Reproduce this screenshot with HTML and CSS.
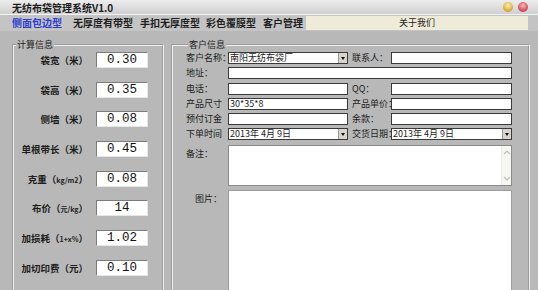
FILE: index.html
```html
<!DOCTYPE html>
<html lang="zh-CN">
<head>
    <meta charset="UTF-8">
    <title>无纺布袋管理系统V1.0</title>
    <link rel="stylesheet" href="styles.css">
</head>
<body>
    <div class="titlebar">
        <span class="title">无纺布袋管理系统V1.0</span>
        <span class="winbtns"><i class="dot yellow"></i><i class="dot red"></i></span>
    </div>
    <div class="tabs">
        <span class="tab active">侧面包边型</span>
        <span class="tab">无厚度有带型</span>
        <span class="tab">手扣无厚度型</span>
        <span class="tab">彩色覆膜型</span>
        <span class="tab">客户管理</span>
        <span class="about">关于我们</span>
    </div>

    <div class="main">
        <fieldset class="calc">
            <legend>计算信息</legend>
            <div class="calc-row"><label>袋宽（米）</label><div class="num">0.30</div></div>
            <div class="calc-row"><label>袋高（米）</label><div class="num">0.35</div></div>
            <div class="calc-row"><label>侧墙（米）</label><div class="num">0.08</div></div>
            <div class="calc-row"><label>单根带长（米）</label><div class="num">0.45</div></div>
            <div class="calc-row"><label>克重（<small>kg/m2</small>）</label><div class="num">0.08</div></div>
            <div class="calc-row"><label>布价（<small>元/kg</small>）</label><div class="num">14</div></div>
            <div class="calc-row"><label>加损耗（<small>1+x%</small>）</label><div class="num">1.02</div></div>
            <div class="calc-row"><label>加切印费（元）</label><div class="num">0.10</div></div>
        </fieldset>

        <fieldset class="customer">
            <legend>客户信息</legend>
            <div class="form">
                <label>客户名称：</label>
                <div class="field select"><span>南阳无纺布袋厂</span><i class="arrow"></i></div>
                <label class="second">联系人：</label>
                <div class="field"></div>

                <label>地址：</label>
                <div class="field wide"></div>

                <label>电话：</label>
                <div class="field"></div>
                <label class="second">QQ：</label>
                <div class="field"></div>

                <label>产品尺寸</label>
                <div class="field">30*35*8</div>
                <label class="second">产品单价：</label>
                <div class="field"></div>

                <label>预付订金</label>
                <div class="field"></div>
                <label class="second">余款：</label>
                <div class="field"></div>

                <label>下单时间</label>
                <div class="field select"><span>2013年 4月 9日</span><i class="arrow"></i></div>
                <label class="second">交货日期：</label>
                <div class="field select"><span>2013年 4月 9日</span><i class="arrow"></i></div>

                <label class="top">备注：</label>
                <div class="notes wide">
                    <div class="scroll">
                        <svg width="8" height="6" viewBox="0 0 8 6"><path d="M1 5 L4 2 L7 5" fill="none" stroke="#b9c1b4" stroke-width="1.2"/></svg>
                        <svg width="8" height="6" viewBox="0 0 8 6"><path d="M1 1 L4 4 L7 1" fill="none" stroke="#b9c1b4" stroke-width="1.2"/></svg>
                    </div>
                </div>

                <label class="top pic">图片：</label>
                <div class="picture wide"></div>
            </div>
        </fieldset>
    </div>
</body>
</html>
```

FILE: styles.css
```css
* {
    box-sizing: border-box;
}
body {
    margin: 0;
    width: 538px;
    height: 290px;
    overflow: hidden;
    background-color: #b8b8b8;
    font-family: "Noto Sans CJK SC", sans-serif;
    color: #1c1c1c;
}
.titlebar {
    height: 15px;
    display: flex;
    align-items: center;
    justify-content: space-between;
    padding: 0 10px 0 12px;
    background: linear-gradient(#ededed, #d0d0d0);
    border-bottom: 1px solid #f4f4f4;
}
.title {
    font-size: 10px;
    font-weight: bold;
    line-height: 15px;
}
.winbtns {
    display: flex;
    gap: 5px;
}
.dot {
    display: block;
    width: 10px;
    height: 10px;
    border-radius: 50%;
}
.yellow {
    background: radial-gradient(circle at 50% 35%, #fff1b0, #dcaa35 65%, #a8791c);
}
.red {
    background: radial-gradient(circle at 50% 35%, #f7b8b8, #d24d55 65%, #9a2a30);
}
.tabs {
    height: 16px;
    display: grid;
    grid-template-columns: 61px 67px 66px 57px 43px 1fr;
    align-items: center;
    padding: 0 10px 0 12px;
    background-color: #c4c4c4;
}
.tab {
    font-size: 10px;
    font-weight: bold;
    line-height: 16px;
    white-space: nowrap;
    color: #1e1e1e;
}
.tab.active {
    color: #2b3ccf;
}
.about {
    height: 14px;
    background-color: #efebd9;
    font-size: 9px;
    line-height: 14px;
    text-align: center;
}
.main {
    display: flex;
    gap: 7px;
    padding: 8px 0 0 12px;
}
fieldset {
    margin: 0;
    height: 262px;
    border: 2px groove #f0f0f0;
}
legend {
    font-size: 9px;
    line-height: 12px;
    padding: 0 1px;
    margin-left: 2px;
}
.calc {
    width: 152px;
    padding: 1px 0 0 0;
    display: flex;
    flex-direction: column;
    gap: 13.7px;
}
.calc-row {
    display: flex;
    align-items: center;
    gap: 8px;
    height: 16px;
}
.calc-row label {
    width: 74px;
    text-align: right;
    font-size: 9.5px;
    font-weight: bold;
    white-space: nowrap;
}
.calc-row small {
    font-size: 7px;
}
.num {
    width: 52px;
    height: 16px;
    background-color: #fff;
    border: 1px solid;
    border-color: #7c7c7c #e6e6e6 #e6e6e6 #7c7c7c;
    font-family: "Liberation Mono", monospace;
    font-size: 12.5px;
    line-height: 14px;
    text-align: center;
    color: #111;
}
.customer {
    width: 359px;
    padding: 1px 0 0 13px;
}
.form {
    display: grid;
    grid-template-columns: 42px 120px 43px 121px;
    grid-template-rows: repeat(6, 12px) 42px 110px;
    row-gap: 3.3px;
    font-size: 9px;
}
.form label {
    line-height: 12px;
    white-space: nowrap;
}
.form label.second {
    padding-left: 4px;
}
.form label.top {
    padding-top: 4px;
}
.form label.pic {
    padding-left: 9px;
}
.field {
    height: 12px;
    background-color: #fff;
    border: 1px solid #3a3a3a;
    line-height: 10px;
    padding-left: 1px;
    white-space: nowrap;
    overflow: hidden;
}
.wide {
    grid-column: 2 / 5;
}
.select {
    display: flex;
    justify-content: space-between;
    padding-right: 0;
}
.arrow {
    position: relative;
    width: 9px;
    height: 10px;
    background-color: #d8d5cf;
    border-left: 1px solid #9a9a9a;
}
.arrow::after {
    content: "";
    position: absolute;
    left: 2px;
    top: 4px;
    border-left: 2px solid transparent;
    border-right: 2px solid transparent;
    border-top: 3px solid #111;
}
.notes {
    display: flex;
    justify-content: flex-end;
    margin-top: 1px;
    background-color: #fff;
    border: 1px solid #8a8a8a;
}
.scroll {
    width: 10px;
    display: flex;
    flex-direction: column;
    justify-content: space-between;
    align-items: center;
    padding: 3px 0;
    background-color: #f6f6f3;
    border-left: 1px solid #ececec;
}
.picture {
    margin-top: 1px;
    background-color: #fff;
    border: 1px solid #9c9c9c;
}
```
